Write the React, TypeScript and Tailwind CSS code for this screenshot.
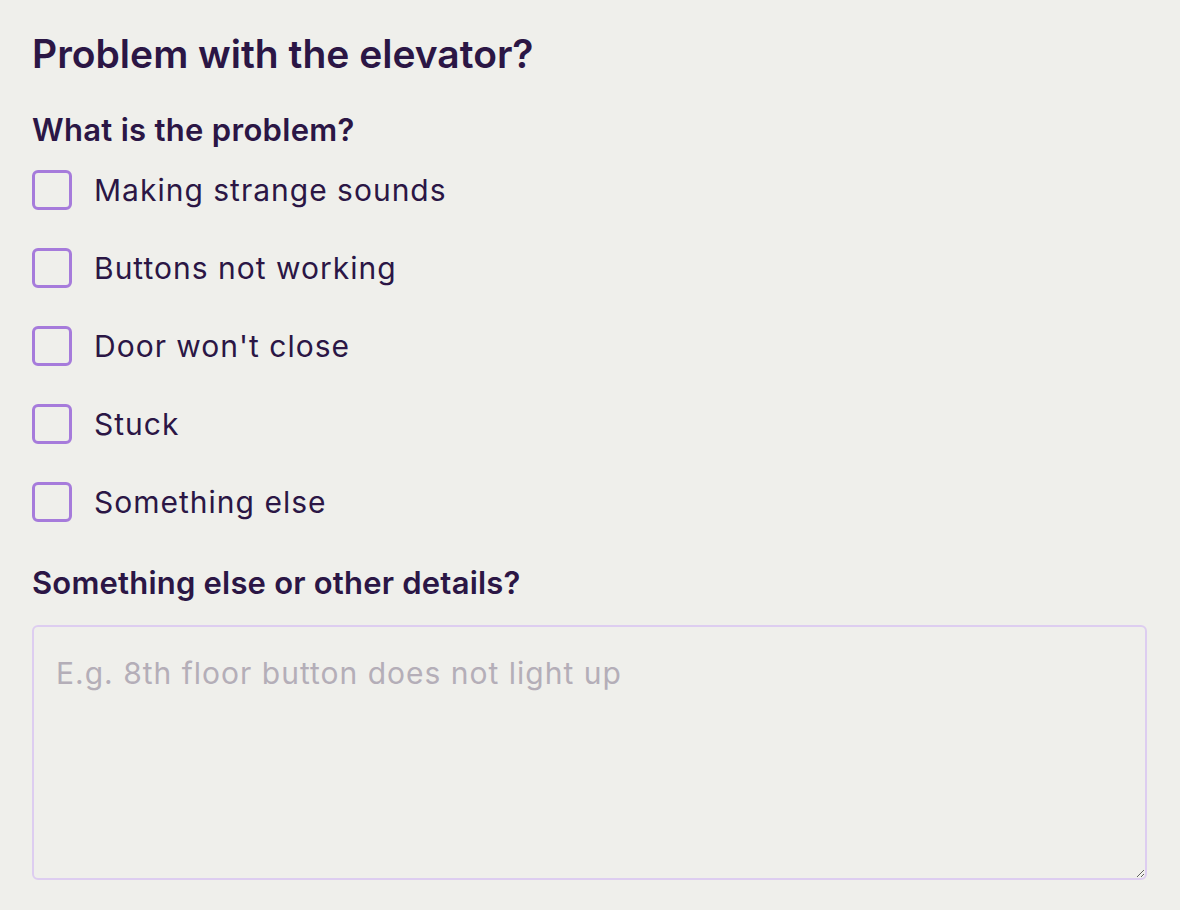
import { useState } from 'react'

const options = ['Making strange sounds', 'Buttons not working', "Door won't close", 'Stuck', 'Something else']

export default function App() {
  const [checked, setChecked] = useState<Record<string, boolean>>({})

  return (
    <div className="min-h-[910px] bg-[#efefeb] px-8 pt-8 pr-[33px] font-['Inter',sans-serif] text-[#2b1645]">
      <h1 className="text-[39px] leading-[44px] font-semibold">Problem with the elevator?</h1>

      <h2 className="mt-[36px] text-[31px] leading-[36px] font-semibold tracking-[0.3px]">What is the problem?</h2>

      {/* Checkboxes */}
      <div className="mt-[22px] flex flex-col gap-[38px]">
        {options.map((opt) => (
          <label key={opt} className="flex items-center gap-[22px] cursor-pointer">
            <input
              type="checkbox"
              checked={!!checked[opt]}
              onChange={() => setChecked({ ...checked, [opt]: !checked[opt] })}
              className="appearance-none w-10 h-10 rounded-md border-[3px] border-[#a67bdb] bg-transparent"
            />
            <span className="text-[30px] leading-[40px] tracking-[1px]">{opt}</span>
          </label>
        ))}
      </div>

      <label className="block mt-[43px] text-[31px] leading-[36px] font-semibold tracking-[0.2px]">Something else or other details?</label>

      <textarea
        placeholder="E.g. 8th floor button does not light up"
        className="mt-6 block w-full h-[255px] rounded-md border-2 border-[#ddcdf0] bg-transparent px-[22px] py-[26px] text-[30px] leading-[40px] tracking-[1px] placeholder:text-[#b4aeb8] outline-none"
      />
    </div>
  )
}
